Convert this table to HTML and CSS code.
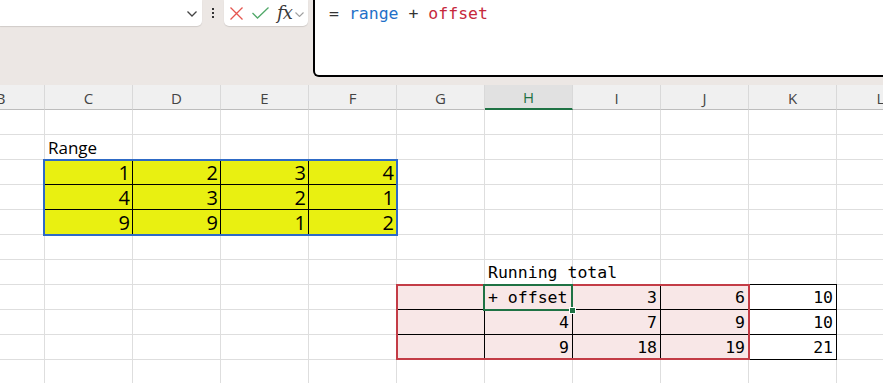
FILE: index.html
```html
<!DOCTYPE html>
<html>
<head>
<meta charset="utf-8">
<link rel="stylesheet" href="styles.css">
</head>
<body>
<div class="app">
  <div class="topbar">
    <div class="namebox">
      <svg class="chev" width="10" height="6" viewBox="0 0 10 6"><polyline points="0.5,0.5 5,5 9.5,0.5" fill="none" stroke="#444" stroke-width="1.3"/></svg>
    </div>
    <div class="dots"><span></span><span></span><span></span></div>
    <div class="fxbox">
      <svg class="ico-x" width="13" height="13" viewBox="0 0 13 13"><path d="M0.5 0.5 L12.5 12.5 M12.5 0.5 L0.5 12.5" stroke="#e5554f" stroke-width="1.3" fill="none"/></svg>
      <svg class="ico-ok" width="17" height="12" viewBox="0 0 17 12"><polyline points="0.5,6 5.5,11 16.5,0.5" fill="none" stroke="#52a96a" stroke-width="1.3"/></svg>
      <span class="fx">fx</span>
      <svg class="chev-s" width="9" height="5" viewBox="0 0 9 5"><polyline points="0.5,0.5 4.5,4.5 8.5,0.5" fill="none" stroke="#a0a0a0" stroke-width="1.1"/></svg>
    </div>
    <div class="formula"><span class="op">=</span> <span class="ref-blue">range</span> <span class="op">+</span> <span class="ref-red">offset</span></div>
  </div>

  <div class="colheads">
    <div class="ch">B</div>
    <div class="ch">C</div>
    <div class="ch">D</div>
    <div class="ch">E</div>
    <div class="ch">F</div>
    <div class="ch">G</div>
    <div class="ch ch-active">H</div>
    <div class="ch">I</div>
    <div class="ch">J</div>
    <div class="ch">K</div>
    <div class="ch">L</div>
  </div>

  <div class="sheet">
    <div class="label-range r2 cC">Range</div>

    <div class="y r3 cC">1</div><div class="y r3 cD">2</div><div class="y r3 cE">3</div><div class="y r3 cF">4</div>
    <div class="y r4 cC">4</div><div class="y r4 cD">3</div><div class="y r4 cE">2</div><div class="y r4 cF">1</div>
    <div class="y r5 cC">9</div><div class="y r5 cD">9</div><div class="y r5 cE">1</div><div class="y r5 cF">2</div>
    <div class="box-blue"></div>

    <div class="label-run r7 cH">Running total</div>

    <div class="p r8 cG"></div><div class="p left r8 cH">+ offset</div><div class="p r8 cI">3</div><div class="p r8 cJ">6</div>
    <div class="p r9 cG"></div><div class="p r9 cH">4</div><div class="p r9 cI">7</div><div class="p r9 cJ">9</div>
    <div class="p r10 cG"></div><div class="p r10 cH">9</div><div class="p r10 cI">18</div><div class="p r10 cJ">19</div>

    <div class="k k-top r8 cK">10</div>
    <div class="k r9 cK">10</div>
    <div class="k r10 cK">21</div>

    <div class="box-red"></div>
    <div class="sel-green r8 cH"></div>
  </div>
</div>
</body>
</html>
```

FILE: styles.css
```css
html, body {
  margin: 0;
  padding: 0;
  background: #ffffff;
}

.app {
  width: 883px;
  height: 383px;
  overflow: hidden;
}

/* ---------- top bar ---------- */
.topbar {
  display: flex;
  align-items: flex-start;
  height: 85px;
  background: #ece7e4;
}

.namebox {
  width: 202px;
  height: 26px;
  box-sizing: border-box;
  background: #ffffff;
  border-radius: 0 0 5px 0;
  box-shadow: 0 1px 1px rgba(0, 0, 0, 0.12);
  display: flex;
  align-items: center;
  justify-content: flex-end;
  padding-right: 5px;
}

.chev {
  margin-top: 2px;
}

.dots {
  width: 22px;
  height: 26px;
  display: flex;
  flex-direction: column;
  align-items: center;
  padding-top: 8px;
  box-sizing: border-box;
  gap: 2px;
}

.dots span {
  width: 2px;
  height: 2px;
  background: #333333;
}

.fxbox {
  width: 84px;
  height: 26px;
  box-sizing: border-box;
  background: #ffffff;
  border-radius: 0 0 5px 5px;
  box-shadow: 0 1px 1px rgba(0, 0, 0, 0.12);
  display: flex;
  align-items: center;
  padding-left: 6px;
}

.ico-x {
  margin-top: 1px;
}

.ico-ok {
  margin-left: 9px;
}

.fx {
  margin-left: 8px;
  font-family: "DejaVu Serif", "Liberation Serif", serif;
  font-style: italic;
  font-size: 18px;
  line-height: 20px;
  color: #3a3a3a;
  letter-spacing: -1px;
}

.chev-s {
  margin-left: 3px;
  margin-top: 2px;
}

.formula {
  margin-left: 5px;
  margin-right: -12px;
  flex: 1;
  height: 77px;
  box-sizing: border-box;
  border: 2px solid #000000;
  border-top: none;
  border-bottom-left-radius: 6px;
  background: #ffffff;
  padding: 4px 0 0 14px;
  font-family: "DejaVu Sans Mono", "Liberation Mono", monospace;
  font-size: 16.5px;
  line-height: 20px;
  white-space: pre;
  color: #333333;
}

.ref-blue {
  color: #1f70c8;
}

.ref-red {
  color: #c6283c;
}

/* ---------- column headers ---------- */
.colheads {
  display: flex;
  margin-left: -43px;
  height: 25px;
}

.ch {
  flex: 0 0 88px;
  box-sizing: border-box;
  height: 25px;
  background: #f0f0f0;
  border-right: 1px solid #d9d9d9;
  border-bottom: 1px solid #bdbdbd;
  text-align: center;
  font-family: "Open Sans", "Noto Sans", sans-serif;
  font-size: 15px;
  line-height: 22px;
  color: #444444;
  padding-top: 2px;
}

.ch-active {
  background: #e1e1e1;
  border-bottom: 2px solid #1f7244;
  color: #1f7244;
  line-height: 21px;
}

/* ---------- sheet ---------- */
.sheet {
  display: grid;
  grid-template-columns: repeat(11, 88px);
  grid-template-rows: repeat(11, 25px);
  margin-left: -43px;
  background-image:
    linear-gradient(to right, transparent 87px, #dedede 87px),
    linear-gradient(to bottom, transparent 24px, #dedede 24px);
  background-size: 88px 25px;
}

.sheet > div {
  box-sizing: border-box;
  white-space: nowrap;
}

.r2 { grid-row: 2; }
.r3 { grid-row: 3; }
.r4 { grid-row: 4; }
.r5 { grid-row: 5; }
.r7 { grid-row: 7; }
.r8 { grid-row: 8; }
.r9 { grid-row: 9; }
.r10 { grid-row: 10; }

.cC { grid-column: 2; }
.cD { grid-column: 3; }
.cE { grid-column: 4; }
.cF { grid-column: 5; }
.cG { grid-column: 6; }
.cH { grid-column: 7; }
.cI { grid-column: 8; }
.cJ { grid-column: 9; }
.cK { grid-column: 10; }

.label-range {
  font-family: "Open Sans", "Noto Sans", sans-serif;
  font-size: 17px;
  line-height: 22px;
  padding: 2px 0 0 3px;
  color: #000000;
}

.y {
  background: #e9f011;
  border-right: 1px solid #000000;
  border-bottom: 1px solid #000000;
  text-align: right;
  padding: 2px 2px 0 0;
  font-family: "Open Sans", "Noto Sans", sans-serif;
  font-size: 20px;
  line-height: 21px;
  color: #000000;
}

.box-blue {
  grid-row: 3 / 6;
  grid-column: 2 / 6;
  margin: -1px -1px -1px -2px;
  border: 2px solid #2e6ac6;
}

.label-run {
  font-family: "DejaVu Sans Mono", "Liberation Mono", monospace;
  font-size: 16.5px;
  line-height: 22px;
  padding: 2px 0 0 3px;
  color: #000000;
}

.p,
.k {
  border-right: 1px solid #000000;
  border-bottom: 1px solid #000000;
  text-align: right;
  padding: 2px 3px 0 0;
  font-family: "DejaVu Sans Mono", "Liberation Mono", monospace;
  font-size: 16.5px;
  line-height: 21px;
  color: #000000;
}

.p {
  background: #f8e7e7;
}

.p.left {
  text-align: left;
  padding-left: 3px;
}

.k {
  background: #ffffff;
}

.k-top {
  margin-top: -1px;
  border-top: 1px solid #000000;
}

.box-red {
  grid-row: 8 / 11;
  grid-column: 6 / 10;
  margin: -1px -1px 0 -1px;
  border: 2px solid #c33c46;
}

.sel-green {
  margin: -1px 0 -1px -2px;
  border: 2px solid #1f7244;
  position: relative;
}

.sel-green::after {
  content: "";
  position: absolute;
  right: -5px;
  bottom: -5px;
  width: 5px;
  height: 5px;
  background: #1f7244;
  border: 1px solid #ffffff;
}
```
